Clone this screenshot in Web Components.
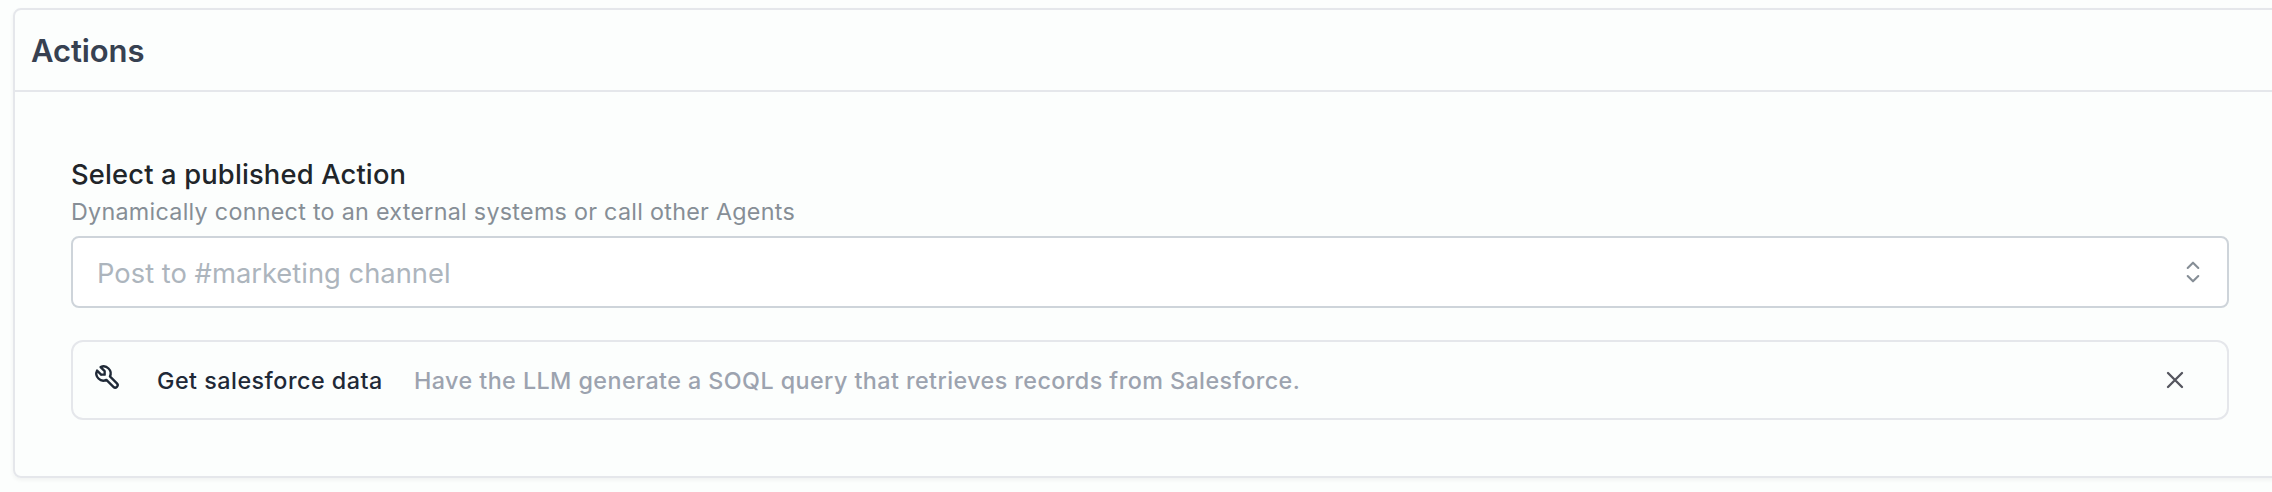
<!DOCTYPE html>
<html lang="en">
<head>
<meta charset="utf-8">
<title>Actions</title>
<style>
html, body { margin: 0; height: 492px; overflow: hidden; background: #fcfefd; }
body { font-family: Inter, "Liberation Sans", sans-serif; padding: 8px 0 0 13px; box-sizing: border-box; }
</style>
</head>
<body>
<section-card>
  <span slot="title">Actions</span>
  <action-select placeholder="Post to #marketing channel">
    <span slot="label">Select a published Action</span>
    <span slot="description">Dynamically connect to an external systems or call other Agents</span>
  </action-select>
  <action-row>
    <span slot="name">Get salesforce data</span>
    <span slot="description">Have the LLM generate a SOQL query that retrieves records from Salesforce.</span>
  </action-row>
</section-card>
<script>
const define = (name, html) => customElements.define(name, class extends HTMLElement {
  constructor() {
    super();
    this.attachShadow({ mode: 'open' }).innerHTML = html;
  }
  connectedCallback() {
    const value = this.shadowRoot.querySelector('.value');
    if (value) value.textContent = this.getAttribute('placeholder');
  }
});

define('section-card', `
<style>
:host { display: block; box-sizing: border-box; width: 2274px; height: 470px; border: 2px solid #e5e7eb; border-radius: 8px; box-shadow: 0 2px 4px rgba(0,0,0,.05); white-space: nowrap; }
header { height: 79px; padding: 1px 0 0 16px; display: flex; align-items: center; border-bottom: 2px solid #e5e7eb; font-size: 31px; font-weight: 600; letter-spacing: -.1px; color: #374151; }
.body { display: flex; flex-direction: column; gap: 32px; padding: 62px 56px 56px; }
</style>
<header><slot name="title"></slot></header>
<div class="body"><slot></slot></div>`);

define('action-select', `
<style>
:host { display: block; }
.label { box-sizing: border-box; height: 40px; padding-top: 1px; line-height: 40px; font-size: 27.3px; font-weight: 500; letter-spacing: .17px; color: #212529; }
.desc { height: 36px; line-height: 36px; font-size: 23.3px; letter-spacing: .28px; color: #868e96; }
.input { margin-top: 6px; box-sizing: border-box; height: 72px; padding: 0 20px 0 24px; display: flex; align-items: center; justify-content: space-between; background: #fff; border: 2px solid #ced4da; border-radius: 8px; font-size: 27.3px; letter-spacing: .03px; color: #adb5bd; }
.value { padding-top: 3px; }
svg { display: block; }
</style>
<div class="label"><slot name="label"></slot></div>
<div class="desc"><slot name="description"></slot></div>
<div class="input"><span class="value"></span>
<svg width="28" height="28" viewBox="0 0 28 28" fill="none" stroke="#868e96" stroke-width="2.1" stroke-linecap="round" stroke-linejoin="round"><path d="M8.7 10 14 4.7 19.3 10M8.7 18 14 23.3 19.3 18"/></svg></div>`);

define('action-row', `
<style>
:host { box-sizing: border-box; height: 80px; display: flex; align-items: center; padding: 0 38px 0 20px; border: 2px solid #e5e7eb; border-radius: 12px; font-size: 23.3px; font-weight: 500; }
svg { display: block; flex: none; }
.tool { margin: -6px 36px 0 0; }
.name, .desc { padding-top: 1px; }
.name { letter-spacing: .5px; color: #1f2937; margin-right: 31.3px; }
.desc { flex: 1; letter-spacing: .44px; color: #9ca3af; }
</style>
<svg class="tool" width="28" height="28" viewBox="0 0 24 24" fill="none" stroke="#1f2937" stroke-width="2" stroke-linecap="round" stroke-linejoin="round"><path d="M7 10h3V7L6.5 3.5a6 6 0 0 1 8 8l6 6a2 2 0 0 1-3 3l-6-6a6 6 0 0 1-8-8L7 10"/></svg>
<div class="name"><slot name="name"></slot></div>
<div class="desc"><slot name="description"></slot></div>
<svg width="28" height="28" viewBox="0 0 24 24" fill="none" stroke="#55565f" stroke-width="2" stroke-linecap="round" stroke-linejoin="round"><path d="M18 6 6 18M6 6l12 12"/></svg>`);
</script>
</body>
</html>
